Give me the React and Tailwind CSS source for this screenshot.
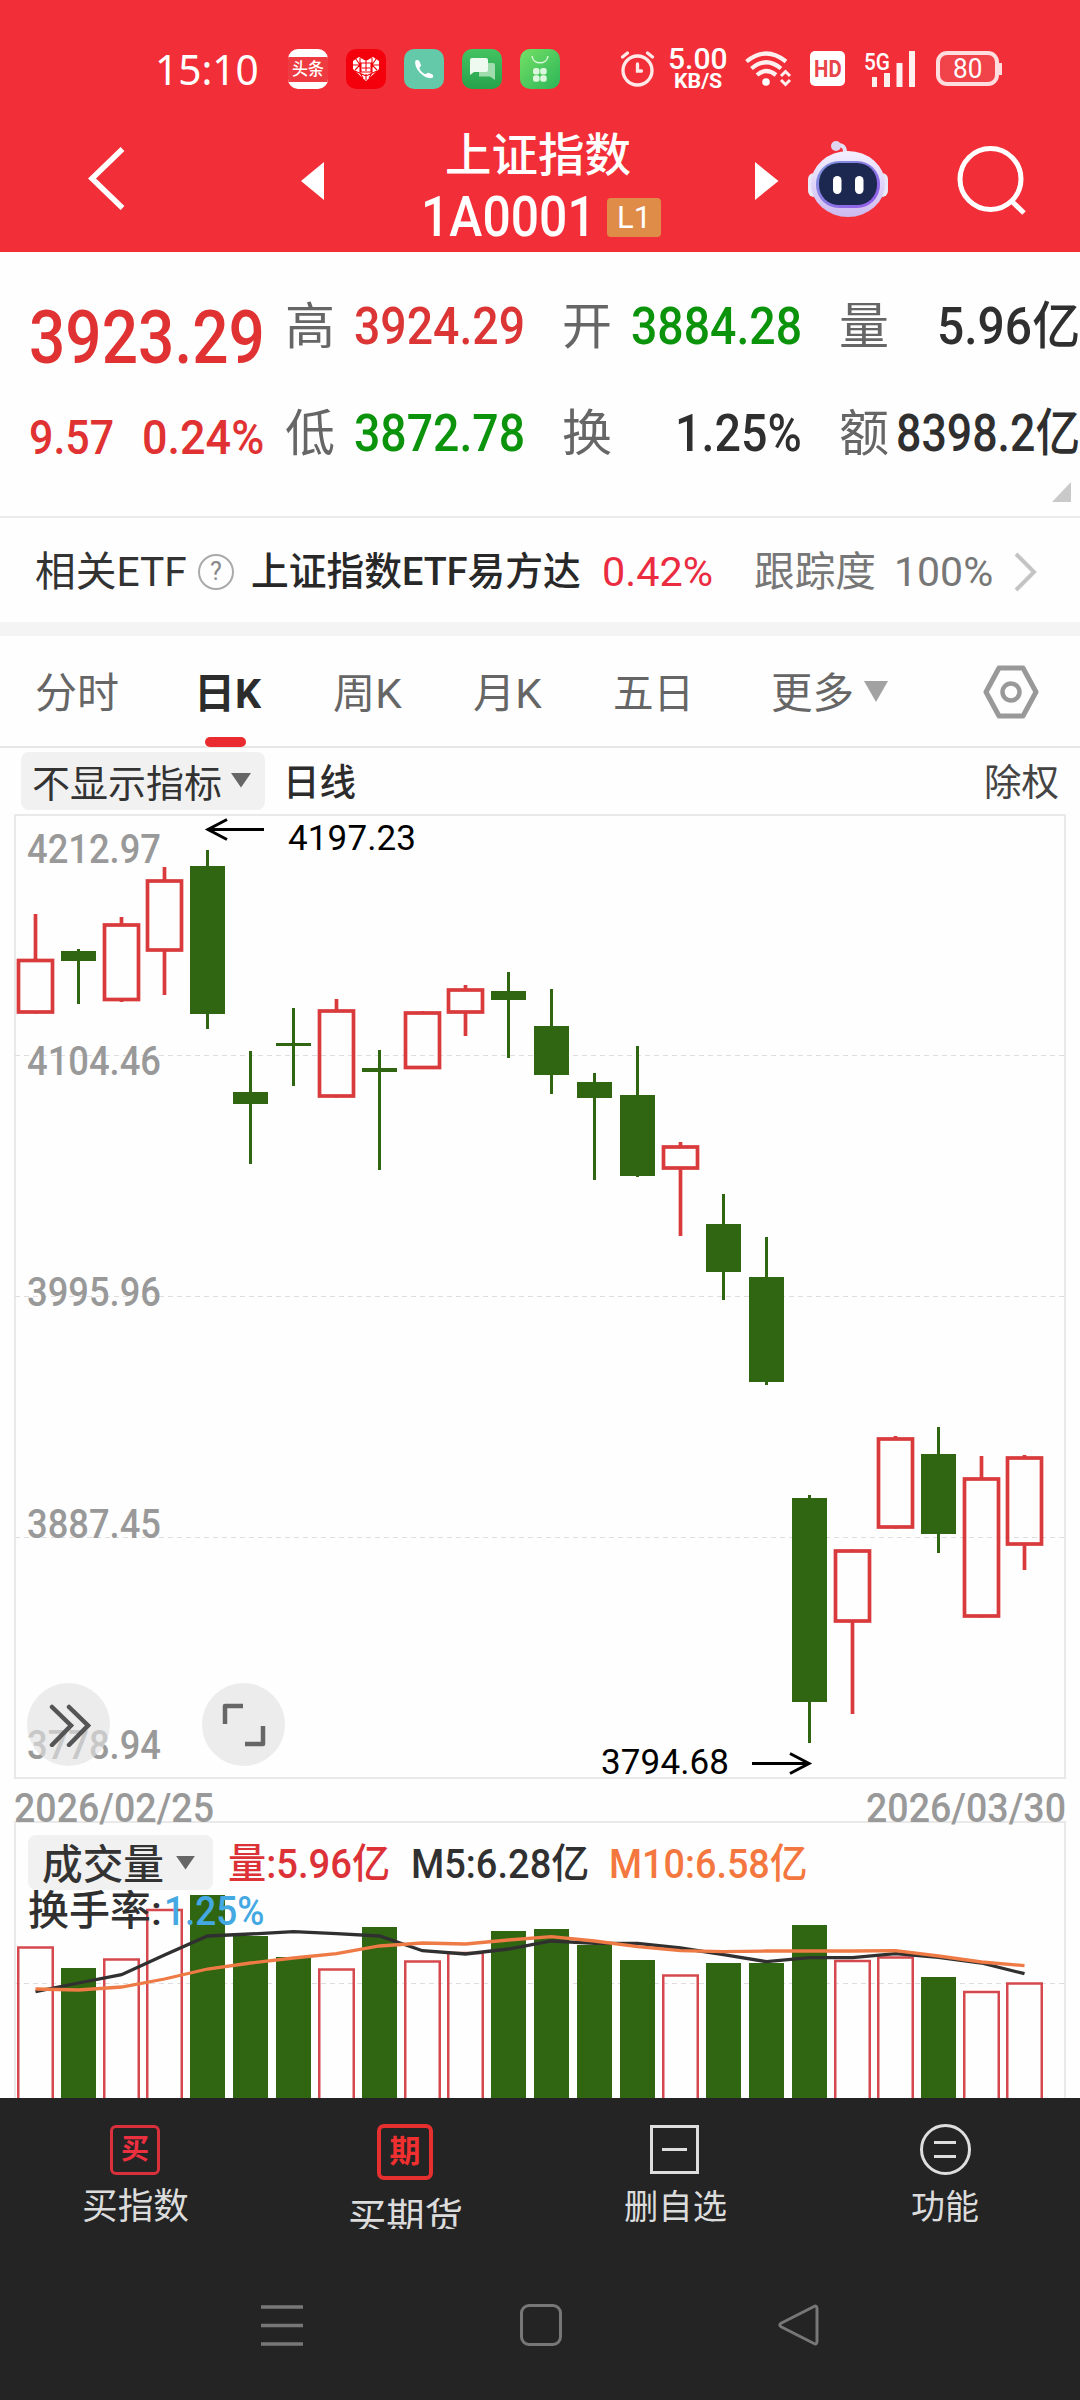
import { useLayoutEffect, useRef } from "react";

/* Text set to an exact advance width by condensing or widening its glyphs. */
function Fit({ w, className = "", children }) {
  const ref = useRef(null);
  useLayoutEffect(() => {
    const el = ref.current;
    el.style.transform = `scaleX(${w / el.offsetWidth})`;
  }, [w]);
  return (
    <span className={`block shrink-0 whitespace-nowrap ${className}`} style={{ width: w }}>
      <span ref={ref} className="inline-block origin-left">{children}</span>
    </span>
  );
}

function StatusBar() {
  return (
    <div className="flex h-[112px] items-center pt-[25px] pl-[155px]">
      <Fit w={104} className="font-['Noto_Sans'] text-[41px] leading-[42px]">15:10</Fit>
      <div className="ml-[29px] flex gap-[18px]">
        <div className="flex size-10 flex-col items-center overflow-hidden rounded-[10px] bg-white">
          <div className="mt-[8px] flex h-[25px] w-full items-center justify-center bg-[#ee3b41]">
            <Fit w={32} className="text-[17px] leading-[20px] font-medium">头条</Fit>
          </div>
        </div>
        <svg className="size-10" viewBox="0 0 40 40">
          <rect width="40" height="40" rx="10" fill="#f4000c" />
          <path d="M20 32L7 20V12L13 8L20 12L27 8L33 12V20Z" fill="#fff" />
          <path d="M7 16H14M26 16H33M10 10L14 16L9 21M30 10L26 16L31 21M14 9V24M26 9V24M9 22L20 27L31 22M20 12V15M20 25V31M14 24L17 29M26 24L23 29M15 14H25V23H15ZM20 15V22M16 19H24" stroke="#f4000c" strokeWidth="1.1" fill="none" />
        </svg>
        <svg className="size-10" viewBox="0 0 40 40">
          <rect width="40" height="40" rx="10" fill="#63c9a9" />
          <path d="M11.5 11.5C13 10.500 15 11 15.500 12.500L17 16C17.500 17.500 15 18 15.500 19.500C16.500 22 18.500 24 21 25C22.500 25.500 23 23.200 24.500 23.800L28 25.300C29.500 26 29.500 28 28.500 28.800C22 31.500 9 20 11.500 11.500Z" fill="#fff" />
        </svg>
        <svg className="size-10" viewBox="0 0 40 40">
          <defs>
            <linearGradient id="msg" x1="0" y1="0" x2="0" y2="1"><stop stopColor="#43c362" /><stop offset="1" stopColor="#27a34b" /></linearGradient>
          </defs>
          <rect width="40" height="40" rx="10" fill="url(#msg)" />
          <path d="M17 14H31Q33 14 33 16V31L28 27.500H17Z" fill="#9fdcae" />
          <path d="M10 9H24Q26 9 26 11V21Q26 23 24 23H12L8 26V11Q8 9 10 9Z" fill="#eefaf0" />
        </svg>
        <svg className="size-10" viewBox="0 0 40 40">
          <defs>
            <linearGradient id="shop" x1="0" y1="0" x2="1" y2="1"><stop stopColor="#74e065" /><stop offset="1" stopColor="#2cb558" /></linearGradient>
          </defs>
          <rect width="40" height="40" rx="10" fill="url(#shop)" />
          <path d="M12 7C13 16 27 16 28 7" fill="none" stroke="#d9f7d8" strokeWidth="1.500" />
          <g fill="#dcf7dd"><rect x="13" y="19" width="6.500" height="6.500" rx="2.500" /><rect x="20.200" y="19" width="6.500" height="6.500" rx="2.500" /><rect x="13" y="26.200" width="6.500" height="6.500" rx="2.500" /><rect x="20.200" y="26.200" width="6.500" height="6.500" rx="2.500" /></g>
        </svg>
      </div>
      <svg className="ml-[60px] h-[38px] w-[35px]" viewBox="0 0 35 38" fill="none" stroke="#ffe9e9" strokeWidth="3.300" strokeLinecap="round">
        <circle cx="17.500" cy="20.500" r="14.500" /><path d="M2.500 7L7.500 3M32.500 7L27.500 3M17.500 14V21H21.500" />
      </svg>
      <div className="ml-[13px] flex w-[60px] flex-col items-center">
        <Fit w={60} className="text-[29px] leading-[24px] font-medium">5.00</Fit>
        <Fit w={48} className="text-[20px] leading-[20px] font-bold">KB/S</Fit>
      </div>
      <svg className="ml-[17px] h-[36px] w-[47px]" viewBox="0 0 47 36" fill="none" stroke="#fff0f0" strokeWidth="4.200">
        <path d="M1.500 10.500Q21 -5.500 41 10.500M6.500 17.500Q21 5 36 17.500M12 24Q21 16 31 24" />
        <circle cx="21" cy="31" r="3.800" fill="#fff" stroke="none" />
        <path d="M36 25L40.500 20.500L45 25M36 29L40.500 33.500L45 29" strokeWidth="3" />
      </svg>
      <div className="ml-[18px] flex h-[35px] w-[35px] items-center justify-center rounded-[5px] bg-white text-[#e8444a]">
        <Fit w={28} className="text-[24px] leading-[26px] font-bold">HD</Fit>
      </div>
      <div className="relative ml-[19px] h-[36px] w-[53px]">
        <svg className="size-full" viewBox="0 0 53 36"><path d="M8 26H13V36H8ZM20 22H26V36H20ZM32.500 12H38.500V36H32.500ZM45 0H51V36H45Z" fill="#fff0f0" /></svg>
        <Fit w={26} className="absolute top-0 left-0 text-[24px] leading-[22px] font-medium">5G</Fit>
      </div>
      <div className="ml-[19px] flex items-center">
        <div className="flex h-[35px] w-[63px] items-center justify-center rounded-[11px] border-[4px] border-[#ffdcdd] bg-[#f0444a]">
          <Fit w={29} className="text-[27px] leading-[28px]">80</Fit>
        </div>
        <div className="h-[12px] w-[3px] bg-[#ffdcdd]" />
      </div>
    </div>
  );
}

function Robot() {
  return (
    <svg className="h-[78px] w-[82px]" viewBox="0 0 82 78">
      <defs>
        <linearGradient id="head" x1="0" y1="0" x2="0" y2="1"><stop stopColor="#f4f0ff" /><stop offset="0.600" stopColor="#dccff8" /><stop offset="1" stopColor="#cdb9ee" /></linearGradient>
        <linearGradient id="rim" x1="0" y1="0" x2="1" y2="1"><stop stopColor="#7f98dc" /><stop offset="1" stopColor="#9458ea" /></linearGradient>
      </defs>
      <path d="M30 5Q39 4 38 15" fill="none" stroke="#e4dff5" strokeWidth="4" />
      <circle cx="29" cy="6" r="5" fill="#ded6ef" />
      <rect x="1" y="33" width="12" height="24" rx="6" fill="#e9e8f6" /><rect x="69" y="33" width="12" height="24" rx="6" fill="#e9e8f6" />
      <ellipse cx="41" cy="44" rx="37" ry="33" fill="url(#head)" />
      <rect x="9" y="21" width="64" height="47" rx="23" fill="url(#rim)" />
      <rect x="12" y="23" width="58" height="42" rx="20" fill="#1c2850" />
      <rect x="26" y="36" width="8.500" height="18" rx="4.200" fill="#fff" /><rect x="48" y="36" width="8.500" height="18" rx="4.200" fill="#fff" />
    </svg>
  );
}

function TitleBar() {
  return (
    <div className="flex h-[140px] pl-[86px]">
      <svg className="mt-[33px] h-[66px] w-[40px]" viewBox="0 0 40 66" fill="none" stroke="#fff" strokeWidth="5.500"><path d="M36.500 4L6 33.500L36.500 63" /></svg>
      <svg className="mt-[50px] ml-[174px] h-[38px] w-[24px]" viewBox="0 0 24 38"><path d="M24 0V38L1 19Z" fill="#fff" /></svg>
      <div className="ml-[96px] flex w-[242px] flex-col items-center">
        <Fit w={186} className="mt-[17px] ml-[-7px] text-[46px] leading-[52px] font-medium">上证指数</Fit>
        <div className="mt-[7px] flex items-center">
          <Fit w={175} className="text-[55px] leading-[58px] font-medium">1A0001</Fit>
          <div className="ml-[11px] flex h-[39px] w-[54px] items-center justify-center rounded-[4px] bg-[#e08c49]">
            <Fit w={34} className="text-[32px] leading-[36px]">L1</Fit>
          </div>
        </div>
      </div>
      <svg className="mt-[50px] ml-[93px] h-[38px] w-[24px]" viewBox="0 0 24 38"><path d="M0 0V38L23.500 19Z" fill="#fff" /></svg>
      <div className="mt-[28px] ml-[28px]"><Robot /></div>
      <svg className="mt-[34px] ml-[68px] h-[72px] w-[72px]" viewBox="0 0 72 72" fill="none" stroke="#fff" strokeWidth="5"><circle cx="33.500" cy="33" r="30.500" /><path d="M54.500 55L67 67" /></svg>
    </div>
  );
}

const QUOTES = [
  [["高", "3924.29", 171, "text-[#dc3535]"], ["低", "3872.78", 171, "text-[#0b930b]"]],
  [["开", "3884.28", 171, "text-[#0b930b]"], ["换", "1.25%", 127, "text-[#2f2f2f]"]],
  [["量", "5.96亿", 143, "text-[#2f2f2f]"], ["额", "8398.2亿", 184, "text-[#2f2f2f]"]],
];

function Quote() {
  return (
    <div className="relative flex h-[266px] border-b-[2px] border-[#ececec] bg-[#fefefe] pt-[22px]">
      <div className="w-[285px] pl-[29px] text-[#e03232]">
        <div className="flex h-[106px] items-center pt-[22px]"><Fit w={236} className="text-[74px] leading-[80px] font-medium">3923.29</Fit></div>
        <div className="flex h-[106px] items-center pt-[9px]">
          <Fit w={85} className="text-[49px] leading-[60px] font-medium">9.57</Fit>
          <Fit w={122} className="ml-[28px] text-[49px] leading-[60px] font-medium">0.24%</Fit>
        </div>
      </div>
      {QUOTES.map((col, i) => (
        <div key={i} className={i === 2 ? "w-[241px]" : "mr-[37px] w-[240px]"}>
          {col.map(([label, value, w, color], row) => (
            <div key={label} className={`flex h-[106px] items-center justify-between ${row ? "pt-[2px]" : ""}`}>
              <span className="w-[50px] shrink-0 text-[50px] leading-[60px] text-[#666]">{label}</span>
              <Fit w={w} className={`text-[51px] leading-[60px] font-medium ${color}`}>{value}</Fit>
            </div>
          ))}
        </div>
      ))}
      <svg className="absolute right-[9px] bottom-[14px] h-[20px] w-[19px]" viewBox="0 0 19 20"><path d="M19 0V20H0Z" fill="#c9c9c9" /></svg>
    </div>
  );
}

function EtfRow() {
  return (
    <div className="flex h-[118px] items-center border-b-[14px] border-[#f4f4f4] bg-[#fefefe] pt-[4px] pl-[35px] leading-[50px]">
      <Fit w={152} className="text-[41px] text-[#333]">相关ETF</Fit>
      <div className="ml-[11px] flex size-[36px] items-center justify-center rounded-full border-[2px] border-[#aaa] text-[25px] text-[#888]">?</div>
      <Fit w={330} className="ml-[17px] text-[39px] font-medium text-[#282828]">上证指数ETF易方达</Fit>
      <Fit w={111} className="ml-[21px] text-[41px] text-[#ea2b40]">0.42%</Fit>
      <Fit w={122} className="ml-[41px] text-[41px] text-[#777]">跟踪度</Fit>
      <Fit w={99} className="ml-[18px] text-[41px] text-[#777]">100%</Fit>
      <svg className="ml-[20px] h-[40px] w-[24px]" viewBox="0 0 24 40" fill="none" stroke="#c4c4c4" strokeWidth="4"><path d="M3 2L21 20L3 38" /></svg>
    </div>
  );
}

function Tabs() {
  return (
    <div className="flex h-[112px] items-center border-b-[2px] border-[#e6e6e6] bg-[#fefefe] pt-[4px] pl-[35px] leading-[56px] text-[#666]">
      <Fit w={84} className="pt-[2px] text-[42px]">分时</Fit>
      <div className="relative ml-[75px] pt-[2px] text-[#2c2c2c]">
        <Fit w={67} className="text-[41px] font-bold">日K</Fit>
        <div className="absolute top-[73px] left-[11px] h-[10px] w-[41px] rounded-[5px] bg-[#ea2c30]" />
      </div>
      <Fit w={69} className="ml-[72px] pt-[2px] text-[41px]">周K</Fit>
      <Fit w={69} className="ml-[71px] pt-[2px] text-[41px]">月K</Fit>
      <Fit w={81} className="ml-[71px] pt-[2px] text-[41px]">五日</Fit>
      <Fit w={83} className="ml-[77px] pt-[2px] text-[42px]">更多</Fit>
      <svg className="mb-[3px] ml-[9px] h-[22px] w-[26px]" viewBox="0 0 26 22"><path d="M1 0H25L13 21Z" fill="#a2a2a2" /></svg>
      <svg className="mb-[2px] ml-[94px] h-[54px] w-[56px]" viewBox="0 0 56 54" fill="none" stroke="#999"><path d="M16 3H40L53 27L40 51H16L3 27Z" strokeWidth="5" strokeLinejoin="round" /><circle cx="28" cy="27" r="8.500" strokeWidth="4.500" /></svg>
    </div>
  );
}

function Caret({ className }) {
  return <svg className={className} viewBox="0 0 22 16"><path d="M1 1H21L11 15.500Z" fill="#666" /></svg>;
}

function IndicatorRow() {
  return (
    <div className="flex h-[66px] items-center bg-[#fefefe] pl-[21px] leading-[50px]">
      <div className="flex h-[58px] w-[244px] items-center rounded-[8px] bg-[#f1f1f1] pl-[11px]">
        <Fit w={190} className="pt-[5px] text-[38px] text-[#333]">不显示指标</Fit>
        <Caret className="mb-[2px] ml-[8px] h-[16px] w-[22px]" />
      </div>
      <Fit w={73} className="ml-[18px] pt-[5px] text-[37px] font-medium text-[#2c2c2c]">日线</Fit>
      <Fit w={75} className="ml-[628px] pt-[5px] text-[37px] text-[#444]">除权</Fit>
    </div>
  );
}

/* up/down, wick top, body top, body bottom, wick bottom, volume bar top */
const DAYS = [
  [1, 914, 959, 1013.5, 1013.5, 1946.5], [0, 949, 951, 961, 1004, 1968], [1, 917, 923.5, 1001, 1002, 1958.5],
  [1, 867, 879.5, 951.5, 995, 1909], [0, 850, 866, 1014, 1029, 1895], [0, 1051, 1092, 1104, 1164, 1936],
  [0, 1008, 1043, 1046, 1086, 1957], [1, 999, 1009.5, 1097.5, 1097, 1968.5], [0, 1050, 1068, 1072, 1170, 1927],
  [1, 1011, 1011.5, 1069, 1069, 1960.5], [1, 985, 988.5, 1013.5, 1036, 1952], [0, 972, 991, 1000, 1058, 1931],
  [0, 989, 1026, 1075, 1094, 1929], [0, 1073, 1082, 1098, 1180, 1945], [0, 1046, 1095, 1176, 1177, 1960],
  [1, 1142, 1145.5, 1169.5, 1236, 1974.5], [0, 1194, 1224, 1272, 1300, 1963], [0, 1237, 1277, 1382, 1385, 1963],
  [0, 1495, 1498, 1702, 1743, 1925], [1, 1550, 1549.5, 1622.5, 1714, 1960], [1, 1436, 1437.5, 1528.5, 1528, 1956.5],
  [0, 1427, 1454, 1534, 1553, 1977], [1, 1456, 1477.5, 1617.5, 1617, 1991], [1, 1455, 1456.5, 1545.5, 1570, 1982.5],
];
const MA5 = [1991.7, 1983, 1974.7, 1955, 1936, 1934, 1931.7, 1933.7, 1936, 1950.7, 1954, 1949, 1941, 1943.3, 1943.3, 1948, 1954.7, 1961.7, 1957.7, 1957.7, 1953.7, 1957.3, 1963, 1973.7];
const MA10 = [1989, 1990, 1987, 1979, 1969, 1963, 1958, 1953.7, 1946, 1943, 1944, 1940, 1936.7, 1941, 1946.7, 1950.7, 1951.7, 1951, 1951, 1951, 1950.7, 1956, 1962, 1965.7];
const cx = (i) => 35.5 + 43 * i;
const points = (ys) => ys.map((y, i) => `${cx(i)},${y}`).join(" ");
const AXIS = [["4212.97", 863], ["4104.46", 1075], ["3995.96", 1306], ["3887.45", 1538], ["3778.94", 1759]];

function PriceChart() {
  return (
    <div className="relative z-10 h-[1007px] bg-[#fefefe]">
      <svg className="block h-[1007px] w-[1080px] overflow-visible" viewBox="0 814 1080 1007">
        <rect x="15" y="815" width="1050" height="963" fill="none" stroke="#e9e9e9" strokeWidth="2" />
        {[1055.5, 1296.5, 1537.5].map((y) => (
          <path key={y} d={`M15 ${y}H1065`} stroke="#dedede" strokeDasharray="5 4" />
        ))}
        {AXIS.map(([t, y]) => (
          <text key={t} x="27" y={y} textLength="134" lengthAdjust="spacingAndGlyphs" fill="#999" className="text-[40px] font-medium">{t}</text>
        ))}
        {DAYS.map(([up, hi, top, bot, lo], i) =>
          up ? (
            <g key={i} stroke="#d93a3c" strokeWidth="3.700" fill="none">
              <path d={`M${cx(i)} ${Math.min(hi, top)}V${top + 1}M${cx(i)} ${bot - 1}V${Math.max(lo, bot)}`} />
              <rect x={cx(i) - 17} y={top + 1.5} width="34" height={bot - top - 3} />
            </g>
          ) : (
            <path key={i} d={`M${cx(i) - 1.5} ${hi}h3V${top}h16V${bot}h-16V${lo}h-3V${bot}h-16V${top}h16Z`} fill="#306612" />
          )
        )}
        <g stroke="#000" strokeWidth="3" fill="none">
          <path d="M264 829.500H208M227 819.500L208 829.500L227 839.500" />
          <path d="M752 1763.500H809M790 1753.500L809 1763.500L790 1773.500" />
        </g>
        <text x="288" y="850" textLength="128" className="text-[35px]">4197.23</text>
        <text x="601" y="1774" textLength="128" className="text-[35px]">3794.68</text>
        <g fill="#999" className="text-[40px] font-medium">
          <text x="14" y="1822" textLength="200" lengthAdjust="spacingAndGlyphs">2026/02/25</text>
          <text x="866" y="1822" textLength="200" lengthAdjust="spacingAndGlyphs">2026/03/30</text>
        </g>
      </svg>
      <div className="absolute top-[869px] left-[27px] flex size-[83px] items-center justify-center rounded-full bg-[#e2e2e2]/65">
        <svg className="size-[44px]" viewBox="0 0 44 44" fill="none" stroke="#555" strokeWidth="4.500" strokeLinecap="round"><path d="M5 4L24 22.500L5 42M22 4L41 22.500L22 42" /></svg>
      </div>
      <div className="absolute top-[869px] left-[202px] flex size-[83px] items-center justify-center rounded-full bg-[#e2e2e2]/65">
        <svg className="size-[46px]" viewBox="0 0 46 46" fill="none" stroke="#666" strokeWidth="4.500" strokeLinejoin="round"><path d="M4 22V4H22M24 42H42V24" /></svg>
      </div>
    </div>
  );
}

function VolumePanel() {
  return (
    <div className="relative h-[277px] bg-[#fefefe]">
      <svg className="absolute inset-0 h-[277px] w-[1080px]" viewBox="0 1821 1080 277">
        <path d="M15 2098V1822H1065V2098" fill="none" stroke="#e9e9e9" strokeWidth="2" />
        <path d="M15 1983.500H1065" stroke="#dedede" strokeDasharray="5 4" />
        {DAYS.map(([up, , , , , v], i) =>
          up ? (
            <rect key={i} x={cx(i) - 17.25} y={v + 1} width="34.500" height="220" fill="none" stroke="#d5494e" strokeWidth="2.500" />
          ) : (
            <rect key={i} x={cx(i) - 17.5} y={v} width="35" height="220" fill="#306612" />
          )
        )}
        <polyline points={points(MA5)} fill="none" stroke="#303030" strokeWidth="3.300" />
        <polyline points={points(MA10)} fill="none" stroke="#ee7a45" strokeWidth="3.300" />
      </svg>
      <div className="relative pt-[14px] pl-[28px]">
        <div className="flex h-[55px] items-center leading-[50px] font-medium">
          <div className="flex h-[55px] w-[185px] items-center rounded-[8px] bg-[#f1f1f1] pl-[14px] text-[#333]">
            <Fit w={122} className="pt-[4px] text-[41px]">成交量</Fit>
            <Caret className="ml-[11px] h-[15px] w-[21px]" />
          </div>
          <Fit w={162} className="ml-[15px] pt-[3px] text-[41px] text-[#dc3237]">量:5.96亿</Fit>
          <Fit w={178} className="ml-[21px] pt-[3px] text-[41px] text-[#303030]">M5:6.28亿</Fit>
          <Fit w={199} className="ml-[20px] pt-[3px] text-[41px] text-[#f47740]">M10:6.58亿</Fit>
        </div>
        <div className="flex h-[40px] items-center pt-[2px] leading-[40px] font-medium">
          <Fit w={134} className="text-[41px] text-[#303030]">换手率:</Fit>
          <Fit w={101} className="ml-[2px] text-[41px] text-[#44a8e2]">1.25%</Fit>
        </div>
      </div>
    </div>
  );
}

function BottomBar() {
  return (
    <div className="flex h-[131px] overflow-hidden text-[#dcdcdc]">
      <div className="flex w-[270px] flex-col items-center pt-[27px]">
        <div className="flex size-[50px] shrink-0 items-center justify-center rounded-[6px] border-[3px] border-[#d9303b] text-[28px] leading-[30px] font-bold text-[#ee2f3f]">买</div>
        <Fit w={107} className="mt-[10px] text-[36px] leading-[44px]">买指数</Fit>
      </div>
      <div className="flex w-[270px] flex-col items-center pt-[26px]">
        <div className="flex size-[56px] shrink-0 items-center justify-center rounded-[7px] border-[4px] border-[#e6302f] text-[31px] leading-[32px] font-bold text-[#f03030]">期</div>
        <Fit w={115} className="mt-[15px] text-[38px] leading-[44px]">买期货</Fit>
      </div>
      <div className="flex w-[270px] flex-col items-center pt-[27px]">
        <div className="mr-[1px] flex size-[49px] shrink-0 items-center justify-center border-[3px] border-[#dedede]"><div className="h-[3px] w-[25px] bg-[#dedede]" /></div>
        <Fit w={103} className="mt-[11px] text-[34px] leading-[44px]">删自选</Fit>
      </div>
      <div className="flex w-[270px] flex-col items-center pt-[26px]">
        <div className="flex size-[51px] shrink-0 flex-col items-center justify-center gap-[11px] rounded-full border-[3px] border-[#dedede]"><div className="h-[3px] w-[22px] bg-[#dedede]" /><div className="h-[3px] w-[22px] bg-[#dedede]" /></div>
        <Fit w={68} className="mt-[10px] text-[34px] leading-[44px]">功能</Fit>
      </div>
    </div>
  );
}

function SystemNav() {
  return (
    <div className="flex pt-[75px] pl-[261px]">
      <svg className="h-[43px] w-[42px]" viewBox="0 0 42 43" stroke="#777" strokeWidth="3.500"><path d="M0 3H42M0 21.500H42M0 40H42" /></svg>
      <div className="ml-[217px] size-[42px] rounded-[9px] border-[3px] border-[#777]" />
      <svg className="ml-[216px] h-[42px] w-[41px]" viewBox="0 0 41 42" fill="none" stroke="#777" strokeWidth="3" strokeLinejoin="round"><path d="M36 2.500Q39 1 39 5V37Q39 41 36 39.500L3.500 23Q0 21 3.500 19Z" /></svg>
    </div>
  );
}

export default function App() {
  return (
    <div className="h-[2400px] w-[1080px] overflow-hidden bg-[#242424] font-[Roboto,'Noto_Sans_CJK_SC',sans-serif]">
      <div className="h-[252px] bg-[#f22f38] text-white">
        <StatusBar />
        <TitleBar />
      </div>
      <Quote />
      <EtfRow />
      <Tabs />
      <IndicatorRow />
      <PriceChart />
      <VolumePanel />
      <BottomBar />
      <SystemNav />
    </div>
  );
}
